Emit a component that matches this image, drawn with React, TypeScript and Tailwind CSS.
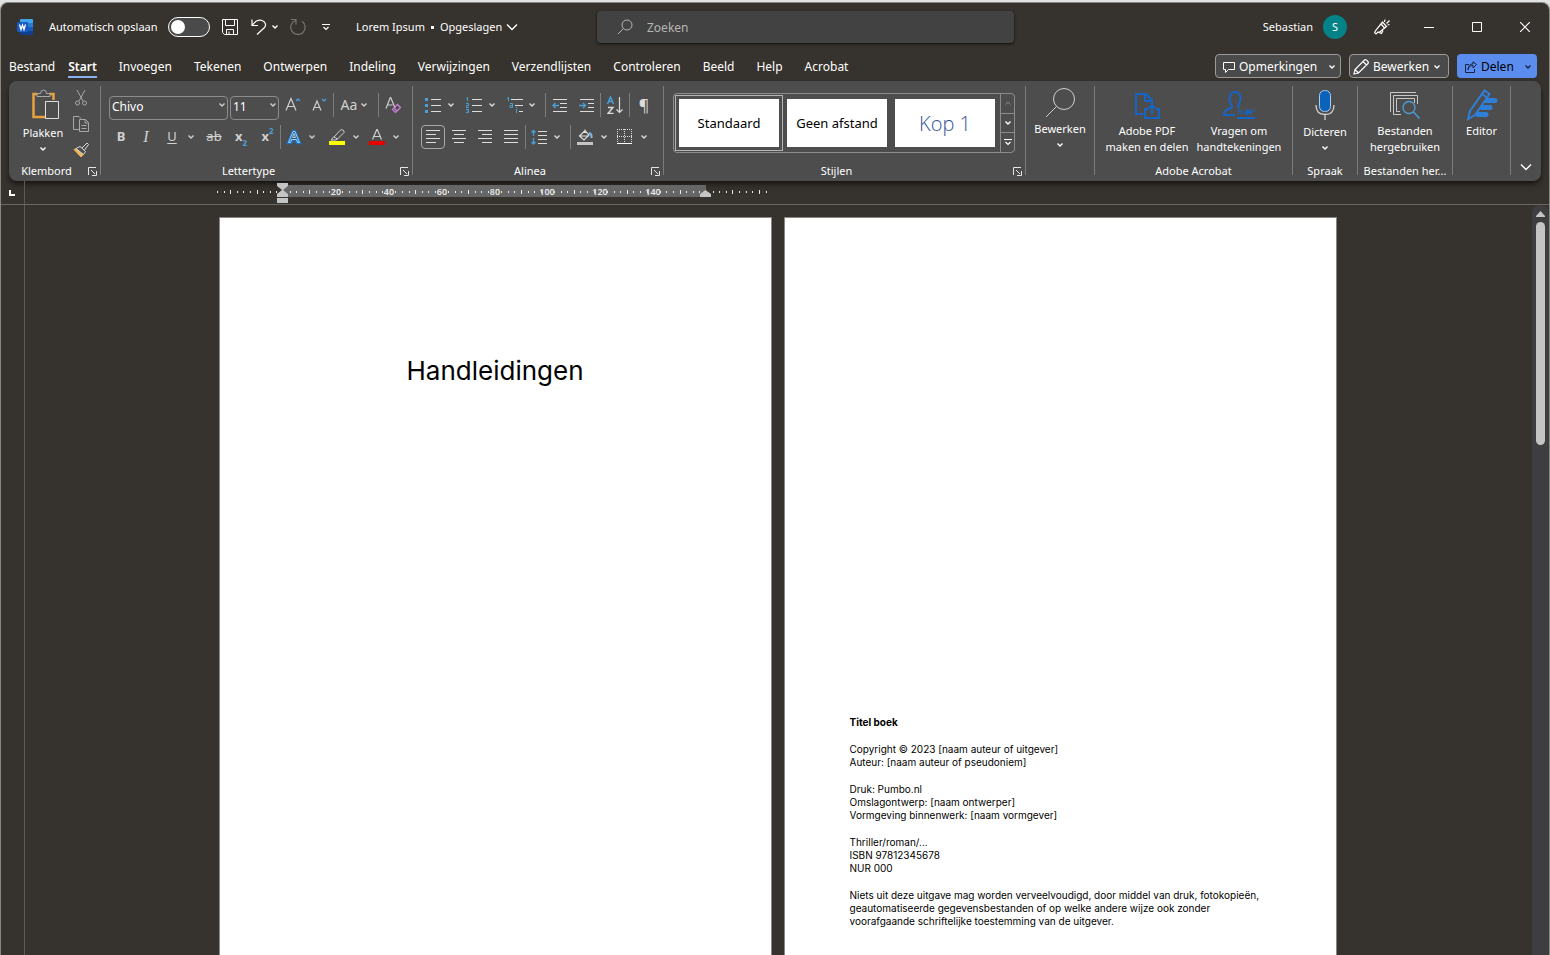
import type { ReactNode } from 'react';
import clsx from 'clsx';

const TABS = [
  'Bestand',
  'Start',
  'Invoegen',
  'Tekenen',
  'Ontwerpen',
  'Indeling',
  'Verwijzingen',
  'Verzendlijsten',
  'Controleren',
  'Beeld',
  'Help',
  'Acrobat',
];

const COLOFON = [
  ['Copyright © 2023 [naam auteur of uitgever]', 'Auteur: [naam auteur of pseudoniem]'],
  ['Druk: Pumbo.nl', 'Omslagontwerp: [naam ontwerper]', 'Vormgeving binnenwerk: [naam vormgever]'],
  ['Thriller/roman/...', 'ISBN 97812345678', 'NUR 000'],
  [
    'Niets uit deze uitgave mag worden verveelvoudigd, door middel van druk, fotokopieën,',
    'geautomatiseerde gegevensbestanden of op welke andere wijze ook zonder',
    'voorafgaande schriftelijke toestemming van de uitgever.',
  ],
];

function Svg({ w = 16, h = 16, children }: { w?: number; h?: number; children: ReactNode }) {
  return (
    <svg width={w} height={h} viewBox={`0 0 ${w} ${h}`} fill="none" stroke="currentColor" className="shrink-0" aria-hidden="true">
      {children}
    </svg>
  );
}

function Chevron({ big = false }: { big?: boolean }) {
  return big ? (
    <Svg w={12} h={8}>
      <path d="M1 1.500l5 5 5-5" strokeWidth="1.400" />
    </Svg>
  ) : (
    <Svg w={6} h={4}>
      <path d="M.5.5L3 3 5.500.5" strokeWidth="1.400" />
    </Svg>
  );
}

// One cell of a ribbon row; the width comes in through className
function Tool({ label, className, children }: { label: string; className: string; children: ReactNode }) {
  return (
    <button type="button" aria-label={label} className={clsx('flex h-6 shrink-0 items-center justify-center', className)}>
      {children}
    </button>
  );
}

function Divider() {
  return <div className="h-6 w-px shrink-0 bg-[#7c7c7c]" />;
}

function Launcher() {
  return (
    <button type="button" aria-label="Meer opties" className="text-[#e6e6e6]">
      <Svg w={9} h={9}>
        <path d="M.5 8V.5H8M3 3l4 4M8.500 4v4.500H4" />
      </Svg>
    </button>
  );
}

interface GroupProps {
  title?: string;
  launcher?: boolean;
  last?: boolean;
  className: string;
  children: ReactNode;
}

function Group({ title, launcher, last, className, children }: GroupProps) {
  return (
    <>
      <section className={clsx('flex flex-col justify-between pb-0.5', className)}>
        {children}
        {title && (
          <div className={clsx('flex h-4 items-center text-[11px] leading-4', launcher && 'pr-[3px]')}>
            <span className={clsx('flex-1 whitespace-nowrap text-center', launcher && 'pr-1')}>{title}</span>
            {launcher && <Launcher />}
          </div>
        )}
      </section>
      {!last && <div className="mb-1.5 mt-[5px] w-px shrink-0 bg-[#7c7c7c]" />}
    </>
  );
}

function Combo({ label, value, className }: { label: string; value: string; className: string }) {
  return (
    <div className={clsx('relative h-6 shrink-0', className)}>
      <select
        aria-label={label}
        defaultValue={value}
        className="h-full w-full appearance-none rounded border border-[#8c8c8c] bg-transparent pb-0.5 pl-0.5 text-xs text-white"
      >
        <option>{value}</option>
      </select>
      <span className="pointer-events-none absolute inset-y-0 right-[3px] flex items-center">
        <Chevron />
      </span>
    </div>
  );
}

function AlignIcon({ rows }: { rows: [number, number][] }) {
  return (
    <Svg w={14} h={14}>
      {rows.map(([x1, x2], i) => (
        <path key={i} d={`M${x1} ${i * 4 + 0.5}H${x2}`} />
      ))}
    </Svg>
  );
}

function WordLogo() {
  return (
    <svg width="16" height="16" viewBox="0 0 16 16" aria-hidden="true">
      <path d="M4 0h11a1 1 0 0 1 1 1v3H3V1a1 1 0 0 1 1-1z" fill="#41a5ee" />
      <path d="M3 4h13v4H3z" fill="#2b7cd3" />
      <path d="M3 8h13v4H3z" fill="#185abd" />
      <path d="M3 12h13v3a1 1 0 0 1-1 1H4a1 1 0 0 1-1-1z" fill="#103f91" />
      <rect y="3" width="11" height="10" rx="1" fill="#185abd" />
      <path d="M2.500 5.500l1.500 5 1.500-4.500L7 10.500l1.500-5" fill="none" stroke="#fff" strokeWidth="1.300" />
    </svg>
  );
}

function TitleBar() {
  return (
    <header className="flex h-12 shrink-0 items-center text-[11px]">
      <div className="flex w-[596px] shrink-0 items-center pl-4">
        <WordLogo />
        <label htmlFor="autosave" className="ml-4 w-[119px] whitespace-nowrap">
          Automatisch opslaan
        </label>
        <span className="relative h-5 w-[42px]">
          <input
            id="autosave"
            type="checkbox"
            role="switch"
            className="block h-5 w-[42px] appearance-none rounded-full border border-white bg-[#4a4a4a]"
          />
          <span className="pointer-events-none absolute left-[3px] top-[3px] size-3.5 rounded-full bg-white" />
        </span>
        <button type="button" aria-label="Opslaan" className="ml-3">
          <Svg>
            <path d="M.5.5h15v15h-13l-2-2zM3.500.5v6h9v-6M4.500 15.500v-5h7v5M7 15v-2.500" />
          </Svg>
        </button>
        <button type="button" aria-label="Ongedaan maken" className="ml-[13px]">
          <Svg>
            <path d="M1 .5v6h6M1.500 6C4 2 8 .5 11 1.500c4 1.500 4.500 5 2 7.500L6 15.500" strokeWidth="1.200" />
          </Svg>
        </button>
        <button type="button" aria-label="Ongedaan maken, lijst" className="ml-[5px]">
          <Chevron />
        </button>
        <button type="button" aria-label="Opnieuw" className="ml-3 text-[#777470]">
          <Svg>
            <path d="M1 .5h5v5M5.500 1.500A7.200 7.200 0 1 0 12 2.300" strokeWidth="1.200" />
          </Svg>
        </button>
        <button type="button" aria-label="Werkbalk aanpassen" className="ml-4">
          <Svg w={8} h={7}>
            <path d="M0 .5h8M1.500 3L4 5.500 6.500 3" strokeWidth="1.200" />
          </Svg>
        </button>
        <button type="button" className="ml-[26px] flex items-center whitespace-nowrap">
          Lorem Ipsum
          <span className="mx-1.5 size-[3px] bg-white" />
          Opgeslagen
          <span className="ml-1">
            <Chevron big />
          </span>
        </button>
      </div>
      <div className="flex h-8 w-[417px] shrink-0 items-center gap-3.5 rounded bg-[#424242] pl-5 text-[#b5b5b5] shadow-sm shadow-black/60">
        <Svg>
          <circle cx="10" cy="6" r="5" />
          <path d="M6.500 9.500L1 15" />
        </Svg>
        <input
          type="search"
          aria-label="Zoeken"
          placeholder="Zoeken"
          className="min-w-0 flex-1 bg-transparent pt-0.5 text-xs outline-none placeholder:text-[#b5b5b5]"
        />
      </div>
      <div className="ml-auto flex items-center pr-[19px]">
        <span>Sebastian</span>
        <button type="button" className="ml-2.5 size-6 rounded-full bg-[#038387] text-[11px]">
          S
        </button>
        <button type="button" aria-label="Binnenkort beschikbaar" className="ml-[27px]">
          <Svg>
            <path
              d="M8.500 3l4 4.500-7.500 6-1-.5-2 2-1.500-1.500 1.500-2.500zM7 5l4 4.500M5 13.500l2.500 1 1.500-3M10.500 3l.5-2.500M12.500 4.500L15.500 1.500M13.500 6l2-.5"
              strokeWidth="1.200"
            />
          </Svg>
        </button>
        <button type="button" aria-label="Minimaliseren" className="ml-[34px]">
          <Svg w={10} h={10}>
            <path d="M0 5.500h10" />
          </Svg>
        </button>
        <button type="button" aria-label="Maximaliseren" className="ml-[38px]">
          <Svg w={10} h={10}>
            <path d="M.5.5h9v9h-9z" />
          </Svg>
        </button>
        <button type="button" aria-label="Sluiten" className="ml-[38px]">
          <Svg w={10} h={10}>
            <path d="M0 0l10 10M10 0L0 10" strokeWidth="1.200" />
          </Svg>
        </button>
      </div>
    </header>
  );
}

function TabBar() {
  return (
    <div className="flex h-[30px] shrink-0 items-center pl-2 pr-3 text-xs">
      <nav className="flex gap-[22px]">
        {TABS.map((tab) => (
          <button
            key={tab}
            type="button"
            className={clsx(
              'h-6 whitespace-nowrap border-b-2 border-t-4 border-transparent',
              tab === 'Start' && '-ml-[9px] border-b-[#8ab0ee] font-semibold',
            )}
          >
            {tab}
          </button>
        ))}
      </nav>
      <div className="ml-auto flex gap-2">
        <button type="button" className="flex h-6 w-[126px] items-center rounded border border-[#9a9a9a] bg-[#4a4a4a] pl-[7px] pr-[5px] pt-0.5">
          <Svg w={12} h={12}>
            <path d="M.5 1.500h11v7H5.500l-3 3v-3h-2z" />
          </Svg>
          <span className="ml-1">Opmerkingen</span>
          <span className="ml-auto">
            <Chevron />
          </span>
        </button>
        <button type="button" className="flex h-6 w-[100px] items-center rounded border border-[#9a9a9a] bg-[#4a4a4a] pl-[3px] pr-2 pt-0.5">
          <Svg>
            <path d="M1 15l1-4.500L11.500 1q1-.8 2 .2l1.300 1.300q1 1 .2 2L5.500 14zM10 2.500L13.500 6M2 10.500L5.500 14" strokeWidth="1.200" />
          </Svg>
          <span className="ml-1">Bewerken</span>
          <span className="ml-auto">
            <Chevron />
          </span>
        </button>
        <button type="button" className="flex h-6 w-20 items-center rounded bg-[#5b8def] pl-2 pr-1.5 pt-0.5 text-[#15233f]">
          <Svg w={12} h={12}>
            <path d="M4 3.500H.5v8h9V8M3 9c.5-3.500 2.500-4.500 5-4.500V7l3.500-3.500L8 .8v2C5 3 3 5 3 9z" />
          </Svg>
          <span className="ml-1 text-black">Delen</span>
          <span className="ml-auto">
            <Chevron />
          </span>
        </button>
      </div>
    </div>
  );
}

function ClipboardGroup() {
  return (
    <Group title="Klembord" launcher className="w-[91px] shrink-0">
      <div className="flex pl-3.5 pt-[7px]">
        <button type="button" className="flex w-10 flex-col items-center text-[11px] leading-4">
          <Svg w={34} h={33}>
            <g transform="translate(6 1)">
              <path d="M5 5H1.500v23H13M18 5h3.500v6" stroke="#e8a33d" strokeWidth="2.500" />
              <path d="M5 7.500V4.500h3.500q0-3.500 3-3.500t3 3.500H18v3z" stroke="#aaa" fill="#4d4d4d" />
              <path d="M13.500 12.500h13v17h-13z" stroke="#e0e0e0" fill="#4d4d4d" />
            </g>
          </Svg>
          <span className="mb-1.5 mt-1">Plakken</span>
          <Chevron />
        </button>
        <div className="flex flex-col items-center gap-2.5 pl-2.5 pt-0.5 text-[#a8a8a8]">
          <button type="button" aria-label="Knippen">
            <Svg>
              <path d="M4 0l6 11M12 0L6 11" />
              <circle cx="4.500" cy="13" r="2" />
              <circle cx="11.500" cy="13" r="2" />
            </Svg>
          </button>
          <button type="button" aria-label="Kopiëren">
            <Svg>
              <path d="M6 13.500H.5V.5H6l2 2M6.500 3.500h6l3 3v9h-9zM12 4v3h3M8.500 9.500h5M8.500 12.500h5" />
            </Svg>
          </button>
          <button type="button" aria-label="Opmaak kopiëren">
            <Svg>
              <path d="M1 7.500l7 7.500 2.500-3-5.500-6z" fill="#f0b75a" stroke="#f0b75a" />
              <path d="M3 6.500l7.500 6 2-3L7 4.500zM9 6l5-5 1.500 1.500-4 5.500" stroke="#d8d8d8" fill="#4d4d4d" />
            </Svg>
          </button>
        </div>
      </div>
    </Group>
  );
}

function FontGroup() {
  return (
    <Group title="Lettertype" launcher className="w-[311px] shrink-0">
      <div className="flex flex-col gap-2 pl-2 pt-3 text-[#d0d0d0]">
        <div className="flex">
          <Combo label="Lettertype" value="Chivo" className="mr-0.5 w-[119px]" />
          <Combo label="Tekengrootte" value="11" className="w-[49px]" />
          <Tool label="Tekengrootte vergroten" className="w-7">
            <Svg>
              <path d="M1 13.500L6 1.500l5 12M3 9.500h6" strokeWidth="1.200" />
              <path d="M11 4l2-2 2 2" stroke="#4a9fd8" strokeWidth="1.300" />
            </Svg>
          </Tool>
          <Tool label="Tekengrootte verkleinen" className="w-[26px]">
            <Svg>
              <path d="M1 13.500L5 4l4 9.500M2.500 10.500h5" strokeWidth="1.200" />
              <path d="M10 2l2 2 2-2" stroke="#4a9fd8" strokeWidth="1.300" />
            </Svg>
          </Tool>
          <Divider />
          <Tool label="Hoofdlettergebruik" className="mr-1 w-10 gap-1 text-sm">
            Aa <Chevron />
          </Tool>
          <Divider />
          <Tool label="Opmaak wissen" className="w-7">
            <Svg>
              <path d="M1 11.500L5.500 0 10 11M2.500 8h5" strokeWidth="1.200" />
              <path d="M7.500 12.500l5-5 3 3-5 5zM9 11l3 3" stroke="#c77fd6" strokeWidth="1.300" />
            </Svg>
          </Tool>
        </div>
        <div className="flex">
          <Tool label="Vet" className="w-6 text-[13px] font-bold">
            B
          </Tool>
          <Tool label="Cursief" className="w-[26px] font-['Liberation_Serif',serif] text-base italic">
            I
          </Tool>
          <Tool label="Onderstrepen" className="w-[26px] text-[13px] underline underline-offset-2">
            U
          </Tool>
          <Tool label="Onderstrepingsstijl" className="w-3">
            <Chevron />
          </Tool>
          <Tool label="Doorhalen" className="w-[34px] text-[13px] line-through">
            ab
          </Tool>
          <Tool label="Subscript" className="w-5 text-[13px] font-bold">
            x<span className="self-end text-[8px] leading-3 text-[#4a9fd8]">2</span>
          </Tool>
          <Tool label="Superscript" className="w-[29px] pl-1 text-[13px] font-bold">
            x<span className="self-start text-[8px] leading-3 text-[#4a9fd8]">2</span>
          </Tool>
          <Divider />
          <Tool label="Teksteffecten" className="w-[26px]">
            <Svg>
              <path d="M2 14L7 2h2l5 12h-3l-1-3H6l-1 3z" stroke="#1a6fc0" strokeWidth="2.500" />
              <path d="M2.500 13.500L7 2.500h2l4.500 11h-2l-1-3h-5l-1 3zM6.500 8.500h3L8 4.500z" stroke="#9fd0f5" />
            </Svg>
          </Tool>
          <Tool label="Teksteffecten, lijst" className="mr-1.5 w-2.5">
            <Chevron />
          </Tool>
          <Tool label="Tekstmarkering" className="w-7">
            <Svg>
              <path d="M5 8l6-6.500q1.500-1.500 3-.5t1 2.500L8.500 10zM5 7.500L2 11h4.500l2-1" />
              <path d="M0 14h16" stroke="#ff0" strokeWidth="4" />
            </Svg>
          </Tool>
          <Tool label="Markeringskleur" className="mr-0.5 w-2.5">
            <Chevron />
          </Tool>
          <Tool label="Tekstkleur" className="w-7">
            <Svg>
              <path d="M3.500 10.500L8 0l4.500 10.500M5 7.500h6" strokeWidth="1.200" />
              <path d="M0 14h16" stroke="#e60000" strokeWidth="4" />
            </Svg>
          </Tool>
          <Tool label="Tekstkleur, lijst" className="w-2.5">
            <Chevron />
          </Tool>
        </div>
      </div>
    </Group>
  );
}

function ParagraphGroup() {
  return (
    <Group title="Alinea" launcher className="w-[250px] shrink-0">
      <div className="flex flex-col gap-2 pl-2 pt-3 text-[#dcdcdc]">
        <div className="flex">
          <Tool label="Opsommingstekens" className="w-6">
            <Svg>
              <path d="M6 2.500h10M6 8.500h10M6 14.500h10" />
              <path d="M0 2.500h3M0 8.500h3M0 14.500h3" stroke="#4a9fd8" strokeWidth="3" />
            </Svg>
          </Tool>
          <Tool label="Opsommingstekens, lijst" className="mr-[5px] w-3">
            <Chevron />
          </Tool>
          <Tool label="Nummering" className="w-6">
            <Svg>
              <path d="M6 2.500h10M6 8.500h10M6 14.500h10" />
              <path d="M.5 1.500l1-1V4M0 6.500h2.500v2h-2v2H3M0 12.500h2.500v3H0M1 14h1.500" stroke="#4a9fd8" />
            </Svg>
          </Tool>
          <Tool label="Nummering, lijst" className="mr-[5px] w-3">
            <Chevron />
          </Tool>
          <Tool label="Lijst met meerdere niveaus" className="w-6">
            <Svg>
              <path d="M4 2.500h12M8 8.500h8M12 14.500h4" />
              <path d="M0 1.500l1.500-1V4M3 6.500h2.500v4H3v-2h2.500M9.500 12v4M9.500 10v1" stroke="#4a9fd8" />
            </Svg>
          </Tool>
          <Tool label="Lijstniveau" className="mr-2 w-2.5">
            <Chevron />
          </Tool>
          <Divider />
          <Tool label="Inspringing verkleinen" className="w-7">
            <Svg>
              <path d="M1 2.500h14M8 6.500h7M8 10.500h7M1 14.500h14" />
              <path d="M7 8.500H1M3.500 6L1 8.500 3.500 11" stroke="#4a9fd8" strokeWidth="1.300" />
            </Svg>
          </Tool>
          <Tool label="Inspringing vergroten" className="w-[26px]">
            <Svg>
              <path d="M1 2.500h14M9 6.500h6M9 10.500h6M1 14.500h14" />
              <path d="M0 8.500h6M4 6l2.500 2.500L4 11" stroke="#4a9fd8" strokeWidth="1.300" />
            </Svg>
          </Tool>
          <Divider />
          <Tool label="Sorteren" className="w-7">
            <Svg w={16} h={18}>
              <path d="M.5 8L3.500 1l3 7M1.500 5.500h4" stroke="#4a9fd8" strokeWidth="1.500" />
              <path d="M1 11.500h5l-5 6h5.500" strokeWidth="1.400" />
              <path d="M12.500 1v15.500M9.500 13.500l3 3 3-3" strokeWidth="1.200" />
            </Svg>
          </Tool>
          <Divider />
          <Tool label="Alineamarkeringen" className="w-7 text-base">
            ¶
          </Tool>
        </div>
        <div className="flex">
          <Tool label="Links uitlijnen" className="w-6 rounded border border-[#a8a8a8]">
            <AlignIcon rows={[[0, 14], [0, 10], [0, 14], [0, 10]]} />
          </Tool>
          <Tool label="Centreren" className="w-7">
            <AlignIcon rows={[[0, 14], [2, 12], [0, 14], [2, 12]]} />
          </Tool>
          <Tool label="Rechts uitlijnen" className="w-6">
            <AlignIcon rows={[[0, 14], [4, 14], [0, 14], [4, 14]]} />
          </Tool>
          <Tool label="Uitvullen" className="w-7">
            <AlignIcon rows={[[0, 14], [0, 14], [0, 14], [0, 14]]} />
          </Tool>
          <Divider />
          <Tool label="Regelafstand" className="w-[26px]">
            <Svg>
              <path d="M7 2.500h9M7 6.500h9M7 10.500h9M7 14.500h9" />
              <path d="M2.500 1.500v5.500M2.500 9v6M.5 3.500l2-2 2 2M.5 13l2 2 2-2" stroke="#4a9fd8" strokeWidth="1.300" />
            </Svg>
          </Tool>
          <Tool label="Regelafstand, lijst" className="mr-2 w-2.5">
            <Chevron />
          </Tool>
          <Divider />
          <Tool label="Arcering" className="w-7">
            <Svg>
              <path d="M2.500 7L8 1.500l4 4.500-5 5zM8 4V.5M3 7h9" strokeWidth="1.200" />
              <path d="M12 4q3 .5 2.500 5" stroke="#7ab8e8" strokeWidth="2" />
              <path d="M0 14.500h16" strokeWidth="3" stroke="#c4c4c4" />
            </Svg>
          </Tool>
          <Tool label="Arceringskleur" className="mr-1 w-2.5">
            <Chevron />
          </Tool>
          <Tool label="Randen" className="w-6">
            <Svg>
              <path d="M.5 0v14M7.500 0v14M14.500 0v14M0 .5h15M0 7.500h15" strokeDasharray="1 1" />
              <path d="M0 14.500h15" stroke="#fff" />
            </Svg>
          </Tool>
          <Tool label="Randen, lijst" className="w-3.5">
            <Chevron />
          </Tool>
        </div>
      </div>
    </Group>
  );
}

function StylesGroup() {
  return (
    <Group title="Stijlen" launcher className="min-w-[361px] flex-1">
      <div className="flex pl-[9px] pr-2.5 pt-3">
        <div className="flex h-[60px] flex-1 rounded border border-[#8c8c8c]">
          <div className="flex flex-1 items-center text-[13px] text-black">
            <button type="button" className="ml-px h-14 w-[108px] border border-[#b4b4b4] p-[3px]">
              <span className="flex h-full items-center justify-center bg-white pt-0.5">Standaard</span>
            </button>
            <button type="button" className="ml-1 h-12 w-[100px] whitespace-nowrap bg-white pt-0.5">
              Geen afstand
            </button>
            <button type="button" className="ml-2 h-12 w-[100px] bg-white pt-0.5 font-['Open_Sans',sans-serif] text-xl font-light text-[#2f5496]">
              Kop 1
            </button>
          </div>
          <div className="flex w-3.5 flex-col divide-y divide-[#8c8c8c] border-l border-[#8c8c8c]">
            <button type="button" aria-label="Vorige rij" className="flex flex-1 items-center justify-center text-[#8c8c8c]">
              <Svg w={6} h={4}>
                <path d="M.5 3.500L3 1l2.500 2.500" />
              </Svg>
            </button>
            <button type="button" aria-label="Volgende rij" className="flex flex-1 items-center justify-center">
              <Chevron />
            </button>
            <button type="button" aria-label="Alle stijlen" className="flex flex-1 items-center justify-center">
              <Svg w={8} h={7}>
                <path d="M0 .5h8M1.500 3L4 5.500 6.500 3" strokeWidth="1.200" />
              </Svg>
            </button>
          </div>
        </div>
      </div>
    </Group>
  );
}

function BigButton({ icon, lines, menu }: { icon: ReactNode; lines: string[]; menu?: boolean }) {
  return (
    <button type="button" className="flex flex-col items-center text-[11px] leading-4">
      <span className="flex h-9 items-center">{icon}</span>
      {lines.map((line) => (
        <span key={line} className="whitespace-nowrap">
          {line}
        </span>
      ))}
      {menu && (
        <span className="mt-1.5">
          <Chevron />
        </span>
      )}
    </button>
  );
}

function Ribbon() {
  return (
    <div className="mx-2 flex h-[100px] shrink-0 rounded-lg bg-[#4d4d4d] shadow-md shadow-black/50">
      <ClipboardGroup />
      <FontGroup />
      <ParagraphGroup />
      <StylesGroup />
      <Group className="w-[68px] shrink-0">
        <div className="flex justify-center pt-1">
          <BigButton
            menu
            lines={['Bewerken']}
            icon={
              <Svg w={32} h={32}>
                <circle cx="20" cy="12" r="10.500" stroke="#d0d0d0" />
                <path d="M12.500 19.500L2 30" stroke="#d0d0d0" />
              </Svg>
            }
          />
        </div>
      </Group>
      <Group title="Adobe Acrobat" className="w-[197px] shrink-0">
        <div className="flex justify-center gap-2 pt-1.5">
          <BigButton
            lines={['Adobe PDF', 'maken en delen']}
            icon={
              <Svg w={26} h={28}>
                <g stroke="#1565c8" strokeWidth="2">
                  <path d="M9 23H2V3h10l6 6v4M11 3v7h7M14 18h-3v9h14v-9h-3M18 23v-9M14.500 17.500L18 14l3.500 3.500" />
                </g>
              </Svg>
            }
          />
          <BigButton
            lines={['Vragen om', 'handtekeningen']}
            icon={
              <Svg w={32} h={30}>
                <g stroke="#1565c8" strokeWidth="2">
                  <path d="M12 25H1c0-4 2-5 7-7 2-1 1-2.500 0-4-3-5-1.500-12 4-12s7 7 4 12c-1 2-1 3 0 4" />
                  <path d="M14 28h18" />
                  <path d="M15 20l4 4M19 20l-4 4M21 24l3-4v4l3-4v4l4-4" strokeWidth="1.300" />
                </g>
              </Svg>
            }
          />
        </div>
      </Group>
      <Group title="Spraak" className="w-16 shrink-0">
        <div className="flex justify-center pt-[7px]">
          <BigButton
            menu
            lines={['Dicteren']}
            icon={
              <Svg w={20} h={34}>
                <rect x="4.500" y="1.500" width="11" height="21" rx="5" fill="#0a63b8" stroke="#a8cdf0" />
                <path d="M1 16q0 9.500 9 9.500t9-9.500M10 25.500V31" stroke="#d0d0d0" strokeWidth="1.300" />
              </Svg>
            }
          />
        </div>
      </Group>
      <Group title="Bestanden her..." className="w-[94px] shrink-0">
        <div className="flex justify-center pt-1.5">
          <BigButton
            lines={['Bestanden', 'hergebruiken']}
            icon={
              <Svg w={30} h={28}>
                <path d="M.5 21V1.500H26M11 23.500H3.500v-19h24V13M10 20.500H6.500v-13h18V12" stroke="#c8c8c8" />
                <circle cx="19" cy="16.500" r="6" stroke="#4a9fd8" strokeWidth="1.300" />
                <path d="M23.500 21L29.500 27.500" stroke="#4a9fd8" strokeWidth="1.500" />
              </Svg>
            }
          />
        </div>
      </Group>
      <Group className="w-[57px] shrink-0">
        <div className="flex justify-center pt-1.5">
          <BigButton
            lines={['Editor']}
            icon={
              <Svg w={32} h={34}>
                <g stroke="#2f7fd8">
                  <path d="M20 12.500h9M16 19.500h8M12 26.500h8" strokeWidth="5" strokeLinecap="round" />
                  <path d="M2 31l2-8L18.500 2.500l5 3.500L9 27z" strokeWidth="2" fill="#4d4d4d" />
                  <path d="M16 6l5 3.500" strokeWidth="2" />
                </g>
              </Svg>
            }
          />
        </div>
      </Group>
      <Group last className="w-[30px] shrink-0">
        <button type="button" aria-label="Lint samenvouwen" className="mb-1.5 mt-auto flex h-3 items-center justify-center">
          <Chevron big />
        </button>
      </Group>
    </div>
  );
}

function Ruler() {
  const zero = 64;
  const step = 6.61;
  const ticks = Array.from({ length: 84 }, (_, i) => i - 10);

  return (
    <div className="flex h-6 shrink-0 border-b border-[#6a6763]">
      <div className="flex w-6 items-center border-r border-[#5c5955] pl-2">
        <Svg w={6} h={6}>
          <path d="M1 0v5h5" strokeWidth="2" />
        </Svg>
      </div>
      <div className="flex flex-1 justify-center pr-[18px]">
        <div className="w-[1118px]">
          <svg width="553" height="23" viewBox="0 0 553 23" className="overflow-visible" aria-hidden="true">
            <rect x="64" y="4" width="423" height="12" fill="#666" />
            {ticks.map((k) => {
              const x = Math.round(zero + k * step);
              if (k === 0 || k === 64) return null;
              if (k > 0 && k < 64 && k % 8 === 0) {
                return (
                  <text key={k} x={x} y="14" fontSize="9" fontWeight="600" fill="#e8e8e8" textAnchor="middle">
                    {(k / 8) * 20}
                  </text>
                );
              }
              const long = k % 4 === 0;
              return <rect key={k} x={x} y={long ? 9 : 10} width="1" height={long ? 4 : 2} fill="#e8e8e8" />;
            })}
            <path d="M58 2h11v3l-5 4 5 4v3H58v-3l5-4-5-4z" fill="#c4c4c4" />
            <path d="M58 17h11v5H58z" fill="#c4c4c4" />
            <path d="M481 16v-3l5.500-4 5.500 4v3z" fill="#c4c4c4" />
          </svg>
        </div>
      </div>
    </div>
  );
}

function Workspace() {
  return (
    <div className="flex min-h-0 flex-1">
      <div className="w-6 shrink-0 border-r border-[#5c5955]" />
      <main className="flex min-w-0 flex-1 justify-center gap-3 overflow-hidden pr-0.5 pt-3 font-['Inter',sans-serif] text-black">
        <article className="w-[553px] shrink-0 border border-b-0 border-[#8a8783] bg-white">
          <h1 className="pt-[135px] text-center text-[26px] leading-9">Handleidingen</h1>
        </article>
        <article className="w-[553px] shrink-0 border border-b-0 border-[#8a8783] bg-white pl-[65px] pt-[498px] text-[10px] leading-[13px]">
          <h2 className="font-bold">Titel boek</h2>
          {COLOFON.map((lines) => (
            <p key={lines[0]} className="mt-3.5">
              {lines.map((line) => (
                <span key={line} className="block whitespace-nowrap">
                  {line}
                </span>
              ))}
            </p>
          ))}
        </article>
      </main>
      <div className="flex w-[17px] shrink-0 flex-col items-center rounded-t-lg bg-[#3e3e40] pt-1.5">
        <svg width="9" height="6" viewBox="0 0 9 6" aria-hidden="true">
          <path d="M4.500 0L9 5v1H0V5z" fill="#c4c4c4" />
        </svg>
        <div className="mt-[5px] h-[223px] w-[9px] rounded-full bg-[#c4c4c4]" />
      </div>
    </div>
  );
}

export default function App() {
  return (
    <div className="flex h-screen flex-col overflow-hidden bg-[#e2e2e2] pt-0.5 font-['Noto_Sans',sans-serif] text-white">
      <div className="flex min-h-0 flex-1 flex-col rounded-t-lg border border-b-0 border-[#8a8783] bg-[#36322d]">
        <TitleBar />
        <TabBar />
        <Ribbon />
        <Ruler />
        <Workspace />
      </div>
    </div>
  );
}
